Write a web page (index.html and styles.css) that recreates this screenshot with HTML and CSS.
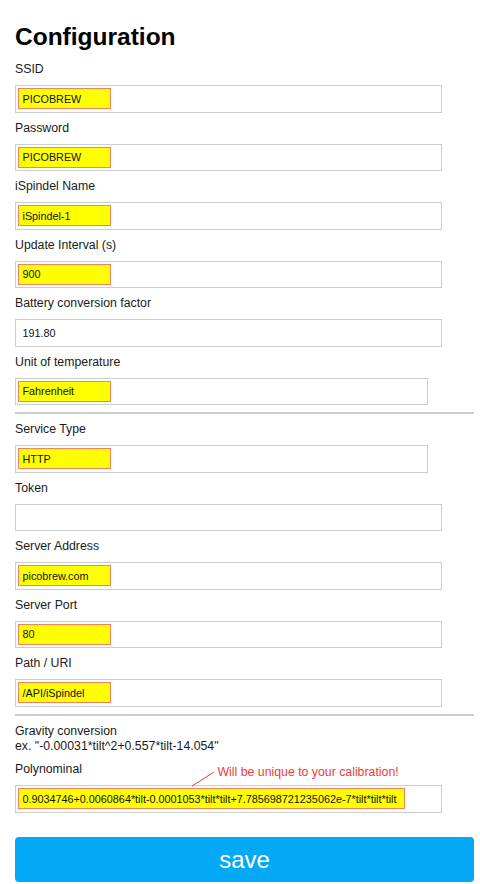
FILE: index.html
```html
<!DOCTYPE html>
<html lang="en">
<head>
<meta charset="utf-8">
<title>Configuration</title>
<link rel="stylesheet" href="styles.css">
</head>
<body>
<main class="page">
  <h1 class="title">Configuration</h1>
  <form class="form">
    <div class="field">
      <label class="label">SSID</label>
      <div class="input"><span class="mark">PICOBREW</span></div>
    </div>
    <div class="field">
      <label class="label">Password</label>
      <div class="input"><span class="mark">PICOBREW</span></div>
    </div>
    <div class="field">
      <label class="label">iSpindel Name</label>
      <div class="input"><span class="mark">iSpindel-1</span></div>
    </div>
    <div class="field">
      <label class="label">Update Interval (s)</label>
      <div class="input"><span class="mark">900</span></div>
    </div>
    <div class="field">
      <label class="label">Battery conversion factor</label>
      <div class="input plain">191.80</div>
    </div>
    <div class="field">
      <label class="label">Unit of temperature</label>
      <div class="input select"><span class="mark">Fahrenheit</span></div>
    </div>
    <hr class="rule">
    <div class="field">
      <label class="label">Service Type</label>
      <div class="input select"><span class="mark">HTTP</span></div>
    </div>
    <div class="field">
      <label class="label">Token</label>
      <div class="input plain"></div>
    </div>
    <div class="field">
      <label class="label">Server Address</label>
      <div class="input"><span class="mark">picobrew.com</span></div>
    </div>
    <div class="field">
      <label class="label">Server Port</label>
      <div class="input"><span class="mark">80</span></div>
    </div>
    <div class="field">
      <label class="label">Path / URI</label>
      <div class="input"><span class="mark">/API/iSpindel</span></div>
    </div>
    <hr class="rule rule-bottom">
    <p class="note">Gravity conversion<br>ex. "-0.00031*tilt^2+0.557*tilt-14.054"</p>
    <div class="field">
      <label class="label">Polynominal</label>
      <div class="input"><span class="mark mark-wide">0.9034746+0.0060864*tilt-0.0001053*tilt*tilt+7.785698721235062e-7*tilt*tilt*tilt</span></div>
      <svg class="callout-line" width="24" height="16" viewBox="0 0 24 16"><line x1="1" y1="15" x2="23" y2="1" stroke="#f03a3a" stroke-width="1"/></svg>
      <span class="callout">Will be unique to your calibration!</span>
    </div>
    <button class="save" type="button">save</button>
  </form>
</main>
</body>
</html>
```

FILE: styles.css
```css
body {
  margin: 0;
  background: #fff;
  font-family: "Liberation Sans", Arial, Helvetica, sans-serif;
  color: #1a1a1a;
}

.page {
  width: 459px;
  padding: 21.5px 0 0 15px;
}

.title {
  margin: 0 0 10.5px;
  font-size: 24.5px;
  line-height: 30px;
  font-weight: bold;
  color: #000;
}

.form {
  display: flex;
  flex-direction: column;
}

.field {
  position: relative;
  margin-bottom: 8px;
}

.label {
  display: block;
  font-size: 12.3px;
  line-height: 15px;
  margin-bottom: 8px;
}

.input {
  box-sizing: border-box;
  width: 427px;
  height: 27.5px;
  border: 1px solid #cdcdcd;
  padding: 2px;
  display: flex;
  align-items: center;
  font-size: 10.8px;
  color: #111;
  background: #fff;
}

.input.plain {
  padding-left: 6.5px;
}

.input.select {
  width: 413px;
}

.mark {
  box-sizing: border-box;
  min-width: 93px;
  height: 21px;
  background: #ffff00;
  border: 1px solid #f3825e;
  padding: 0 3.5px;
  display: flex;
  align-items: center;
  white-space: nowrap;
}

.mark-wide {
  padding-right: 7px;
}

.rule {
  height: 2px;
  border: 0;
  background: #cccccc;
  margin: -1px 0 8px;
}

.rule-bottom {
  margin-bottom: 8.5px;
}

.note {
  margin: 0 0 8px;
  font-size: 12.3px;
  line-height: 15px;
}

.callout {
  position: absolute;
  left: 202.5px;
  top: 2.5px;
  font-size: 12.3px;
  line-height: 15px;
  color: #f03a3a;
  white-space: nowrap;
}

.callout-line {
  position: absolute;
  left: 176px;
  top: 9px;
}

.save {
  display: block;
  width: 100%;
  height: 45px;
  margin-top: 16.5px;
  border: 0;
  border-radius: 4px;
  background: #03a9f4;
  color: #fff;
  font-family: "Liberation Sans", Arial, Helvetica, sans-serif;
  font-size: 24px;
  padding: 0;
}
```
